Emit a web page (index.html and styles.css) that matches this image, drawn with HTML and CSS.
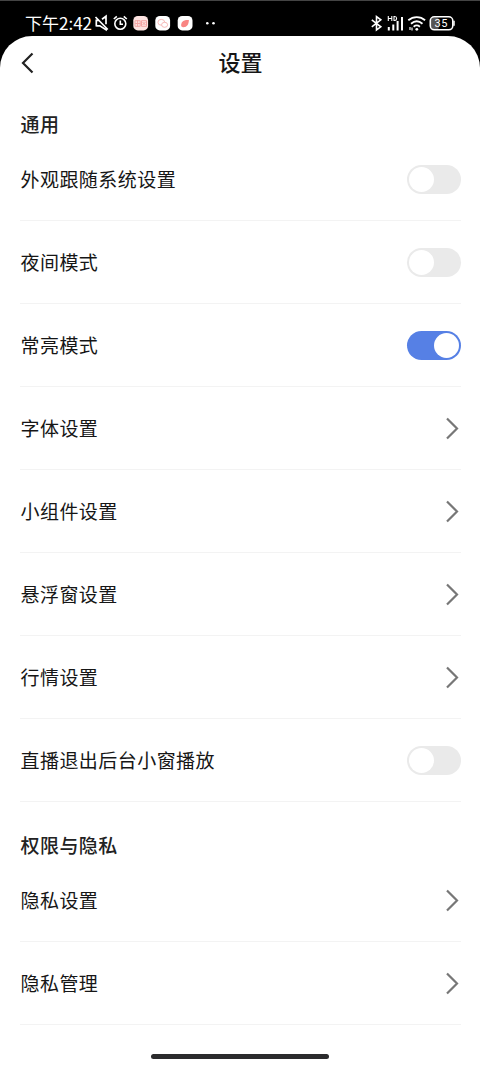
FILE: index.html
```html
<!DOCTYPE html>
<html lang="zh-CN">
<head>
<meta charset="utf-8">
<title>设置</title>
<link rel="stylesheet" href="styles.css">
</head>
<body>
<div class="status">
  <span class="time">下午2:42</span>
  <svg class="status-left" width="130" height="24" viewBox="92 11 130 24" fill="none" stroke="#fff" stroke-width="1.600">
    <path d="M96.300 19.500v7M96.300 20.300h2.500M102 19.200l4-3v8M106 28.500v1.300l-6.200-4h-3.500M95.500 17l12.300 12.500" stroke-width="1.700"/>
    <circle cx="120.300" cy="23.800" r="5.500"/>
    <path d="M120.300 20.600v3.600h2.700M113.800 19l3-2.600M126.800 19l-3-2.600"/>
    <g stroke="none">
      <rect x="133.300" y="16" width="14.800" height="14.400" rx="4.500" fill="#fde3e1"/>
      <rect x="155.300" y="16" width="14.800" height="14.400" rx="4.500" fill="#fff"/>
      <rect x="177.700" y="16" width="14.800" height="14.400" rx="4.500" fill="#fff"/>
      <circle cx="207.300" cy="23.300" r="1.300" fill="#fff"/>
      <circle cx="213.500" cy="23.300" r="1.300" fill="#fff"/>
      <path d="M181.200 26.300c-.4-4.300 1.800-6.700 7.700-6.300-.2 4.600-2 7.500-6 7.200z" fill="#f98583"/>
    </g>
    <g stroke="#f3a5a4" stroke-width="1">
      <path d="M135 20.700h5.200v5.600H135zM135 23.500h5.200M137.600 20v6.800M141.500 20.700h5v5.600h-5zM142.500 22l3 3M145.500 22l-3 3"/>
    </g>
    <g stroke="#f4b2b0" stroke-width=".9">
      <ellipse cx="161.300" cy="22.300" rx="3.400" ry="2.900"/>
      <ellipse cx="164.600" cy="24.800" rx="3" ry="2.500" fill="#fff"/>
    </g>
  </svg>
  <svg class="status-right" width="88" height="24" viewBox="368 11 88 24" fill="none" stroke="#fff" stroke-width="1.600">
    <path d="M371.800 19.800l9 7-4.300 3.200V16.600l4.300 3.200-9 7"/>
    <path d="M388.300 16v5M391.800 16v5M388.300 18.500h3.500M394 16.500v4h.8c2.400 0 2.400-4 0-4z" stroke-width="1.100"/>
    <path d="M388.800 27v3.500M393.300 24.500v6M397.600 21v9.500M402 17v13.500" stroke-width="2"/>
    <path d="M408.300 20.300c5-4.200 12-4.200 16.800 0M411 23.700c3.500-3 8-3 11.500 0M413.600 26.700c2-1.600 4.300-1.600 6.300 0" stroke-width="1.800"/>
    <circle cx="416.800" cy="29.300" r="1.400" fill="#fff" stroke="none"/>
    <path d="M410 27v3M412 27.500v3" stroke-width="1.200"/>
    <rect x="431" y="17.500" width="8" height="12" rx="3" fill="#555" stroke="none"/>
    <rect x="430.300" y="16.800" width="22.500" height="13" rx="4" stroke-width="1.600"/>
    <path d="M454 20.800v5" stroke-width="1.500"/>
    <text class="battery" x="434.400" y="27">35</text>
  </svg>
</div>
<main class="sheet">
  <header class="header">
    <svg class="back" width="14" height="24" viewBox="0 0 14 24"><path d="M12.500 2.500L3 12l9.500 9.500"/></svg>
    <h1 class="title">设置</h1>
  </header>
  <h2 class="section">通用</h2>
  <div class="row"><span>外观跟随系统设置</span><i class="toggle"></i></div>
  <div class="row"><span>夜间模式</span><i class="toggle"></i></div>
  <div class="row"><span>常亮模式</span><i class="toggle on"></i></div>
  <div class="row"><span>字体设置</span><svg class="arrow" width="14" height="24" viewBox="0 0 14 24"><path d="M2 2.500L12 12.500 2 22.500"/></svg></div>
  <div class="row"><span>小组件设置</span><svg class="arrow" width="14" height="24" viewBox="0 0 14 24"><path d="M2 2.500L12 12.500 2 22.500"/></svg></div>
  <div class="row"><span>悬浮窗设置</span><svg class="arrow" width="14" height="24" viewBox="0 0 14 24"><path d="M2 2.500L12 12.500 2 22.500"/></svg></div>
  <div class="row"><span>行情设置</span><svg class="arrow" width="14" height="24" viewBox="0 0 14 24"><path d="M2 2.500L12 12.500 2 22.500"/></svg></div>
  <div class="row"><span>直播退出后台小窗播放</span><i class="toggle"></i></div>
  <h2 class="section">权限与隐私</h2>
  <div class="row"><span>隐私设置</span><svg class="arrow" width="14" height="24" viewBox="0 0 14 24"><path d="M2 2.500L12 12.500 2 22.500"/></svg></div>
  <div class="row"><span>隐私管理</span><svg class="arrow" width="14" height="24" viewBox="0 0 14 24"><path d="M2 2.500L12 12.500 2 22.500"/></svg></div>
  <div class="home"></div>
</main>
</body>
</html>
```
FILE: styles.css
```css
* { box-sizing: border-box; }
body {
  margin: 0;
  width: 480px;
  height: 1066px;
  overflow: hidden;
  background: #000;
  color: #161616;
  font-family: "Noto Sans CJK SC", sans-serif;
}
.status {
  height: 36px;
  padding: 11px 24px 0 25px;
  display: flex;
  border-top: 1px solid #444;
  color: #fff;
}
.status svg { margin-top: -1px; flex: none; }
.time {
  width: 67px;
  font-size: 17px;
  line-height: 22px;
  white-space: nowrap;
}
.status-right { margin-left: auto; }
.battery {
  font: 400 11px Roboto, sans-serif;
  fill: #fff;
  stroke: none;
  letter-spacing: .6px;
}
.sheet {
  height: 1030px;
  padding: 0 19px 0 20px;
  background: #fff;
  border-radius: 32px 32px 0 0;
}
.header {
  height: 45px;
  padding-top: 9px;
  display: grid;
  grid-template-columns: 14px 1fr 14px;
  align-items: center;
}
.back, .arrow { fill: none; }
.back { stroke: #222; stroke-width: 2.2; }
.arrow { stroke: #777; stroke-width: 2.2; margin-right: 2.5px; }
.title {
  margin: 0;
  padding-bottom: 3px;
  font-size: 22px;
  font-weight: 500;
  line-height: 33px;
  text-align: center;
}
.section {
  height: 57px;
  margin: 0;
  padding: 29px 0 0 .5px;
  font-size: 19px;
  font-weight: 500;
  line-height: 28px;
  letter-spacing: .45px;
  color: #222;
}
.row {
  height: 83px;
  padding-left: .5px;
  display: flex;
  align-items: center;
  justify-content: space-between;
  border-bottom: 1px solid #f3f3f3;
  font-size: 19px;
  line-height: 28px;
  letter-spacing: .45px;
}
.toggle {
  width: 54px;
  height: 29px;
  padding: 2px;
  display: flex;
  border-radius: 15px;
  background: #eaeaea;
}
.toggle::before {
  content: "";
  width: 25px;
  height: 25px;
  border-radius: 50%;
  background: #fff;
}
.toggle.on { justify-content: flex-end; background: #5680e5; }
.home {
  width: 178px;
  height: 5px;
  margin: 29px 0 0 131px;
  border-radius: 3px;
  background: #2b2b2d;
}
```
